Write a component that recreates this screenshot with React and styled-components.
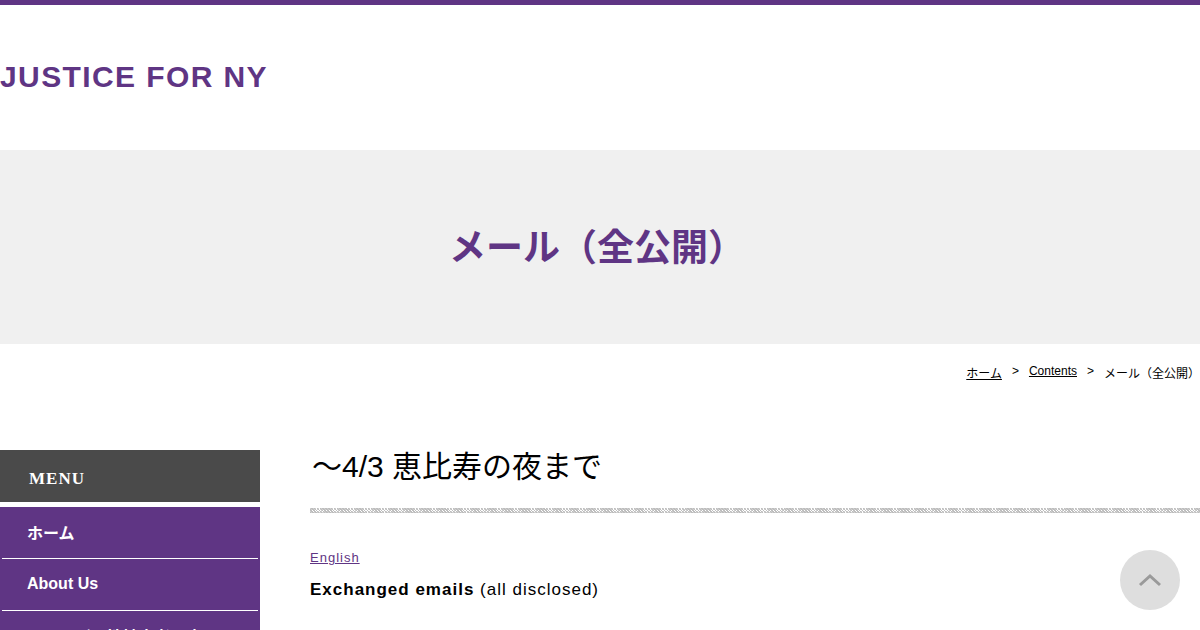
import React from 'react'
import styled, { createGlobalStyle } from 'styled-components'

const purple = '#5f3584'

const Global = createGlobalStyle`
  body {
    margin: 0;
    font-family: "Liberation Sans", Arial, "Noto Sans CJK JP", sans-serif;
    background: #fff;
    color: #000;
  }
`

const Page = styled.div`
  border-top: 5px solid ${purple};
  width: 1200px;
  height: 625px;
  overflow: hidden;
  position: relative;
`

const Header = styled.header`
  height: 145px;
  display: flex;
  align-items: center;
  padding-bottom: 2px;
  box-sizing: border-box;
`

const Logo = styled.h1`
  margin: 0;
  font-size: 30px;
  font-weight: bold;
  letter-spacing: 1.4px;
  color: ${purple};
`

const Hero = styled.div`
  background: #f0f0f0;
  height: 194px;
  display: flex;
  align-items: center;
  justify-content: center;
  padding-bottom: 4px;
  box-sizing: border-box;
`

const HeroTitle = styled.h2`
  margin: 0 0 0 -6px;
  font-size: 37px;
  font-weight: bold;
  color: ${purple};
  font-family: "Liberation Sans", "Noto Sans CJK JP", sans-serif;
`

const Crumbs = styled.nav`
  display: flex;
  justify-content: flex-end;
  align-items: flex-start;
  gap: 8px;
  font-size: 12px;
  padding: 20px 0 0 0;
  height: 106px;
  box-sizing: border-box;
`

const Crumb = styled.a`
  color: #000;
  text-decoration: underline;
`

const Sep = styled.span`
  padding: 0 2px;
`

const Body = styled.div`
  display: flex;
  gap: 50px;
`

const Side = styled.aside`
  width: 260px;
  flex-shrink: 0;
`

const MenuHead = styled.div`
  height: 52px;
  background: #4a4a4a;
  color: #fff;
  font-family: "Liberation Serif", serif;
  font-weight: bold;
  font-size: 17px;
  letter-spacing: 1px;
  display: flex;
  align-items: center;
  padding: 5px 0 0 29px;
  box-sizing: border-box;
  margin-bottom: 5px;
`

const MenuList = styled.ul`
  list-style: none;
  margin: 0;
  padding: 0 2px;
  background: ${purple};
`

const MenuItem = styled.li`
  height: 52px;
  display: flex;
  align-items: center;
  padding-left: 25px;
  padding-bottom: 1px;
  box-sizing: border-box;
  color: #fff;
  font-weight: bold;
  font-size: 16px;
  border-bottom: 1px solid #fff;
`

const Main = styled.main`
  flex: 1;
`

const PostTitle = styled.h3`
  margin: 0 0 24px;
  line-height: 34px;
  font-size: 30px;
  font-weight: normal;
  font-family: "Liberation Sans", "Noto Sans CJK JP", sans-serif;
  padding-left: 2px;
`

const Stripe = styled.div`
  height: 5px;
  background:
    repeating-linear-gradient(45deg, #bdbdbd 0 1px, transparent 1px 2px),
    repeating-linear-gradient(-45deg, #d0d0d0 0 1px, #fff 1px 2px);
  margin-bottom: 37px;
`

const LangLink = styled.a`
  display: block;
  color: ${purple};
  font-size: 13px;
  letter-spacing: 1px;
  text-decoration: underline;
  margin-bottom: 15px;
`

const Lead = styled.p`
  margin: 0;
  font-size: 17px;
  letter-spacing: 1px;
`

const TopButton = styled.div`
  position: absolute;
  left: 1120px;
  top: 545px;
  width: 60px;
  height: 60px;
  border-radius: 50%;
  background: #dedede;
  display: flex;
  align-items: center;
  justify-content: center;
`

export default function App() {
  return (
    <Page>
      <Global />
      <Header>
        <Logo>JUSTICE FOR NY</Logo>
      </Header>
      <Hero>
        <HeroTitle>メール（全公開）</HeroTitle>
      </Hero>
      <Crumbs>
        <Crumb>ホーム</Crumb>
        <Sep>&gt;</Sep>
        <Crumb>Contents</Crumb>
        <Sep>&gt;</Sep>
        <span>メール（全公開）</span>
      </Crumbs>
      <Body>
        <Side>
          <MenuHead>MENU</MenuHead>
          <MenuList>
            <MenuItem>ホーム</MenuItem>
            <MenuItem>About Us</MenuItem>
            <MenuItem>ほとんど・性被害者の声</MenuItem>
          </MenuList>
        </Side>
        <Main>
          <PostTitle>～4/3 恵比寿の夜まで</PostTitle>
          <Stripe />
          <LangLink>English</LangLink>
          <Lead><b>Exchanged emails</b> (all disclosed)</Lead>
        </Main>
      </Body>
      <TopButton>
        <svg width="26" height="16" viewBox="0 0 26 16">
          <path d="M3 13 L13 4 L23 13" fill="none" stroke="#9a9a9a" strokeWidth="3" />
        </svg>
      </TopButton>
    </Page>
  )
}
